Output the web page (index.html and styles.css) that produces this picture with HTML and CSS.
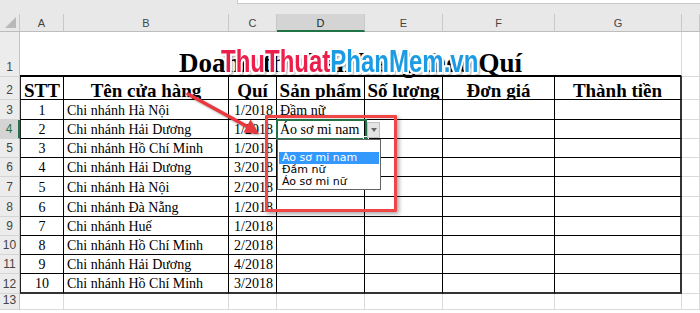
FILE: index.html
```html
<!DOCTYPE html>
<html lang="vi">
<head>
<meta charset="utf-8">
<title>Doanh thu bán hàng theo Quí</title>
<link rel="stylesheet" href="styles.css">
</head>
<body>
<div class="app">
  <div class="topbar"><div class="fbar"></div></div>
  <div class="sheet">
    <!-- column headers -->
    <div class="ch corner"></div>
    <div class="ch">A</div><div class="ch">B</div><div class="ch">C</div><div class="ch sel">D</div><div class="ch">E</div><div class="ch">F</div><div class="ch">G</div><div class="ch"></div>

    <!-- row 1 -->
    <div class="rh">1</div>
    <div class="c title">Doanh thu bán hàng theo Quí</div>
    <div class="c"></div>

    <!-- row 2 -->
    <div class="rh">2</div>
    <div class="c t a hd ctr">STT</div><div class="c t hd ctr">Tên cửa hàng</div><div class="c t hd ctr">Quí</div><div class="c t hd ctr">Sản phẩm</div><div class="c t hd ctr">Số lượng</div><div class="c t hd ctr">Đơn giá</div><div class="c t g hd ctr">Thành tiền</div><div class="c"></div>

    <div class="rh">3</div>
    <div class="c t a ctr">1</div><div class="c t">Chi nhánh Hà Nội</div><div class="c t rt">1/2018</div><div class="c t">Đầm nữ</div><div class="c t"></div><div class="c t"></div><div class="c t g"></div><div class="c"></div>

    <div class="rh rsel">4</div>
    <div class="c t a ctr">2</div><div class="c t">Chi nhánh Hải Dương</div><div class="c t rt">1/2018</div><div class="c t">Áo sơ mi nam</div><div class="c t"></div><div class="c t"></div><div class="c t g"></div><div class="c"></div>

    <div class="rh">5</div>
    <div class="c t a ctr">3</div><div class="c t">Chi nhánh Hồ Chí Minh</div><div class="c t rt">1/2018</div><div class="c t"></div><div class="c t"></div><div class="c t"></div><div class="c t g"></div><div class="c"></div>

    <div class="rh">6</div>
    <div class="c t a ctr">4</div><div class="c t">Chi nhánh Hải Dương</div><div class="c t rt">3/2018</div><div class="c t"></div><div class="c t"></div><div class="c t"></div><div class="c t g"></div><div class="c"></div>

    <div class="rh">7</div>
    <div class="c t a ctr">5</div><div class="c t">Chi nhánh Hà Nội</div><div class="c t rt">2/2018</div><div class="c t"></div><div class="c t"></div><div class="c t"></div><div class="c t g"></div><div class="c"></div>

    <div class="rh">8</div>
    <div class="c t a ctr">6</div><div class="c t">Chi nhánh Đà Nẵng</div><div class="c t rt">1/2018</div><div class="c t"></div><div class="c t"></div><div class="c t"></div><div class="c t g"></div><div class="c"></div>

    <div class="rh">9</div>
    <div class="c t a ctr">7</div><div class="c t">Chi nhánh Huế</div><div class="c t rt">1/2018</div><div class="c t"></div><div class="c t"></div><div class="c t"></div><div class="c t g"></div><div class="c"></div>

    <div class="rh">10</div>
    <div class="c t a ctr">8</div><div class="c t">Chi nhánh Hồ Chí Minh</div><div class="c t rt">2/2018</div><div class="c t"></div><div class="c t"></div><div class="c t"></div><div class="c t g"></div><div class="c"></div>

    <div class="rh">11</div>
    <div class="c t a ctr">9</div><div class="c t">Chi nhánh Hải Dương</div><div class="c t rt">4/2018</div><div class="c t"></div><div class="c t"></div><div class="c t"></div><div class="c t g"></div><div class="c"></div>

    <div class="rh">12</div>
    <div class="c t a last ctr">10</div><div class="c t last">Chi nhánh Hồ Chí Minh</div><div class="c t last rt">3/2018</div><div class="c t last"></div><div class="c t last"></div><div class="c t last"></div><div class="c t g last"></div><div class="c"></div>

    <div class="rh">13</div>
    <div class="c"></div><div class="c"></div><div class="c"></div><div class="c"></div><div class="c"></div><div class="c"></div><div class="c"></div><div class="c"></div>
  </div>

  <!-- overlays -->
  <div class="watermark"><span class="wm-red">ThuThuat</span><span class="wm-blue">PhanMem.vn</span></div>

  <svg class="arrow" width="700" height="313" viewBox="0 0 700 313">
    <line x1="188" y1="94" x2="248" y2="127" stroke="#e8383d" stroke-width="3.5" stroke-linecap="round"/>
    <polygon points="259,134 243.5,132.5 250.5,119.5" fill="#e8383d"/>
  </svg>

  <div class="cellsel"><span class="handle"></span></div>
  <div class="ddbtn"><span class="tri"></span></div>
  <div class="ddlist">
    <div class="item on">Áo sơ mi nam</div>
    <div class="item">Đầm nữ</div>
    <div class="item">Áo sơ mi nữ</div>
  </div>
  <div class="redbox"></div>
</div>
</body>
</html>
```

FILE: styles.css
```css
* { box-sizing: border-box; }
html, body { margin: 0; padding: 0; background: #fff; }
.app {
  position: relative;
  width: 700px;
  height: 313px;
  overflow: hidden;
  background: #fff;
}
.topbar {
  height: 14px;
  background: #e8e8e8;
  display: flex;
}
.fbar {
  margin-left: 237px;
  flex: 1;
  height: 4px;
  background: #fff;
  border-bottom: 1px solid #c8c8c8;
  border-left: 1px solid #c8c8c8;
}
.sheet {
  display: grid;
  grid-template-columns: 20px 44px 165px 48px 88px 78px 112px 127px 18px;
  grid-template-rows: 18px 45px 23px 20px 19px 19px 19px 20px 20px 19px 19px 19px 20px 16px 3px;
}
.ch {
  background: #e8e8e8;
  border-right: 1px solid #c8c8c8;
  border-bottom: 1px solid #bdbdbd;
  display: flex;
  align-items: center;
  justify-content: center;
  font: 11px "Liberation Sans", Arial, sans-serif;
  color: #444;
  padding-top: 1px;
}
.ch.sel {
  background: #d4d4d4;
  border-bottom: 2px solid #217346;
  color: #262626;
}
.corner { position: relative; }
.corner::after {
  content: "";
  position: absolute;
  right: 3px;
  bottom: 3px;
  width: 11px;
  height: 11px;
  background: #b9b9b9;
  clip-path: polygon(100% 0, 100% 100%, 0 100%);
}
.rh {
  background: #ececec;
  border-right: 1px solid #c4c4c4;
  border-bottom: 1px solid #d4d4d4;
  display: flex;
  align-items: flex-end;
  justify-content: center;
  font: 12px "Liberation Sans", Arial, sans-serif;
  line-height: 17px;
  color: #444;
}
.rh.rsel {
  background: #d4d4d4;
  border-right: 2px solid #217346;
  color: #217346;
}
.c {
  border-right: 1px solid #dadada;
  border-bottom: 1px solid #dadada;
  display: flex;
  align-items: flex-end;
  padding: 0 3px;
  white-space: nowrap;
  overflow: hidden;
  font: 14px "Liberation Serif", "Times New Roman", serif;
  line-height: 17px;
  color: #000;
}
.c.t {
  border-right-color: #000;
  border-bottom-color: #000;
}
.c.a { border-left: 1px solid #222; }
.c.g { border-right: 2px solid #333; }
.c.last { border-bottom: 2px solid #333; }
.c.ctr { justify-content: center; }
.c.rt { justify-content: flex-end; }
.c.hd {
  font-weight: bold;
  font-size: 19px;
  line-height: 17px;
  padding: 0;
}
.title {
  grid-column: span 7;
  justify-content: center;
  font-weight: bold;
  font-size: 27px;
  line-height: 24px;
  border-bottom: 2px solid #000;
  overflow: visible;
}

/* overlays */
.watermark {
  position: absolute;
  left: 221px;
  top: 45px;
  font: bold 32px "Liberation Sans", Arial, sans-serif;
  line-height: 32px;
  white-space: nowrap;
  transform: scaleX(0.75);
  transform-origin: 0 0;
  text-shadow:
    -2px 0 0 #fff, 2px 0 0 #fff, 0 -2px 0 #fff, 0 2px 0 #fff,
    -2px -2px 0 #fff, 2px -2px 0 #fff, -2px 2px 0 #fff, 2px 2px 0 #fff,
    3px 3px 3px rgba(0,0,0,0.45);
}
.wm-red { color: #ea1f4b; }
.wm-blue { color: #1c9be2; }

.arrow {
  position: absolute;
  left: 0;
  top: 0;
  filter: drop-shadow(1px 1px 1px rgba(0,0,0,0.35));
}

.cellsel {
  position: absolute;
  left: 276px;
  top: 119px;
  width: 91px;
  height: 21px;
  border: 2px solid #217346;
}
.handle {
  position: absolute;
  right: -4px;
  bottom: -4px;
  width: 6px;
  height: 6px;
  background: #217346;
  border: 1px solid #fff;
}
.ddbtn {
  position: absolute;
  left: 367px;
  top: 122px;
  width: 13px;
  height: 16px;
  background: #e4e4e4;
  border: 1px solid #c2c2c2;
  display: flex;
  align-items: center;
  justify-content: center;
}
.tri {
  width: 0;
  height: 0;
  border-left: 3.5px solid transparent;
  border-right: 3.5px solid transparent;
  border-top: 4px solid #666;
}
.ddlist {
  position: absolute;
  left: 277px;
  top: 139px;
  width: 104px;
  height: 51px;
  background: #fff;
  border: 1px solid #646464;
  padding-top: 12px;
}
.item {
  margin: 0 1px;
  height: 12px;
  padding-left: 3px;
  font: 11px "DejaVu Sans", Verdana, sans-serif;
  line-height: 12px;
  color: #000;
  white-space: nowrap;
}
.item.on {
  background: #3399ff;
  color: #fff;
}
.redbox {
  position: absolute;
  left: 265px;
  top: 115px;
  width: 132px;
  height: 97px;
  border: 3px solid #f04646;
  border-radius: 1px;
  box-shadow: 2px 2px 4px rgba(0,0,0,0.35), inset 1px 1px 2px rgba(0,0,0,0.15);
}
```
